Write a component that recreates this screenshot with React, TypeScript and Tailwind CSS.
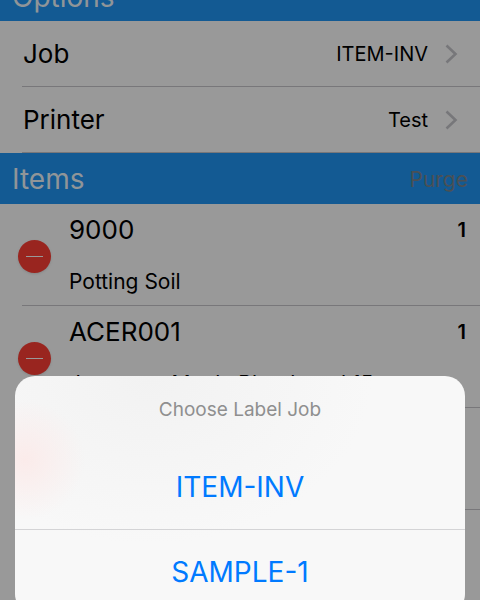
import { useState } from 'react';

const items = [
  { sku: '9000', name: 'Potting Soil', qty: 1 },
  { sku: 'ACER001', name: 'Japanese Maple Bloodgood 15', qty: 1 },
  { sku: '', name: '', qty: null },
];

const jobs = ['ITEM-INV', 'SAMPLE-1'];

function Chevron() {
  return (
    <svg className="w-[13px] h-5 shrink-0" viewBox="0 0 13 20" fill="none" stroke="#c7c7cc" strokeWidth="2.6" aria-hidden="true">
      <path d="M1.5 1.5 L10.5 10 L1.5 18.5" />
    </svg>
  );
}

function OptionRow({ label, value }: { label: string; value: string }) {
  return (
    <button type="button" className="flex items-center w-full h-[66px] pl-[22px] text-left">
      <span className="flex flex-1 items-center h-full pl-px pr-[22px] border-b border-[#c8c7cc]">
        <span className="flex-1 text-[26px]">{label}</span>
        <span className="text-[20px] mr-[17px]">{value}</span>
        <Chevron />
      </span>
    </button>
  );
}

export default function App() {
  const [job, setJob] = useState('ITEM-INV');

  return (
    <div className="relative h-screen overflow-hidden bg-white text-black font-['Inter',sans-serif]">
      <main>
        {/* Options */}
        <section>
          <header className="flex items-end h-[21px] px-3 overflow-hidden bg-[#2096f5]">
            <h2 className="text-[28px] leading-[48px] text-white/95">Options</h2>
          </header>
          <OptionRow label="Job" value={job} />
          <OptionRow label="Printer" value="Test" />
        </section>

        {/* Items */}
        <section>
          <header className="flex items-center justify-between h-[51px] px-3 bg-[#2096f5]">
            <h2 className="text-[28px] text-white/95">Items</h2>
            <button type="button" className="pt-0.5 text-[21px] text-[#7c868e]">Purge</button>
          </header>
          <ul>
            {items.map((item, i) => (
              <li key={i} className="flex h-[102px] pl-[22px]">
                <div className="flex flex-1 border-b border-[#c8c7cc]">
                  <button
                    type="button"
                    aria-label={`Remove ${item.sku}`}
                    className="flex items-center justify-center self-center w-[33px] h-[33px] -ml-1 mt-1 shrink-0 rounded-full bg-[#ff3f35] shadow"
                  >
                    <span className="w-[17px] h-px bg-white"></span>
                  </button>
                  <div className="flex-1 ml-[18px] pt-2">
                    <p className="text-[26px] leading-9">{item.sku}</p>
                    <p className="mt-[18px] text-[21px] leading-8">{item.name}</p>
                  </div>
                  <span className="pt-2 pr-3.5 text-[20px] leading-9 font-semibold">{item.qty}</span>
                </div>
              </li>
            ))}
          </ul>
        </section>
      </main>

      {/* Action sheet */}
      <div className="absolute inset-0 flex flex-col justify-end px-[15px] bg-black/40">
        <div
          role="dialog"
          aria-labelledby="sheet-title"
          className="-mb-[14px] rounded-[20px] overflow-hidden text-center bg-[#f8f8f8] bg-[radial-gradient(circle_at_10px_84px,#fbebea_0,#fbebea00_60px),radial-gradient(ellipse_at_30%_0,#f2f2f2_0,#f8f8f8_50%)]"
        >
          <h3 id="sheet-title" className="h-[68px] text-[19px] leading-[68px] text-[#8f8f8f]">Choose Label Job</h3>
          {jobs.map((name, i) => (
            <button
              key={name}
              type="button"
              onClick={() => setJob(name)}
              className={`block w-full h-[85px] text-[28px] text-[#007aff] ${i > 0 ? 'border-t border-[#d4d4d6]' : ''}`}
            >
              {name}
            </button>
          ))}
        </div>
      </div>
    </div>
  );
}
